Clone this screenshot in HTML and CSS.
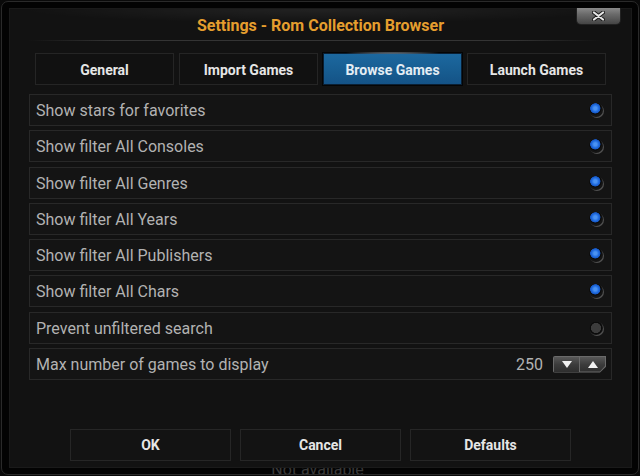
FILE: index.html
```html
<!DOCTYPE html>
<html>
<head>
<meta charset="utf-8">
<link rel="stylesheet" href="styles.css">
</head>
<body>
<div class="frame">
  <div class="panel">
    <div class="titlebar">
      <h1 class="title">Settings - Rom Collection Browser</h1>
      <button class="close" aria-label="Close">
        <svg width="13" height="10" viewBox="0 0 13 10"><path d="M2 1.5 L11 8.5 M11 1.5 L2 8.5" stroke="#1a1a1a" stroke-width="4" stroke-linecap="round"/><path d="M2 1.5 L11 8.5 M11 1.5 L2 8.5" stroke="#e6e6e6" stroke-width="2.2" stroke-linecap="round"/></svg>
      </button>
    </div>
    <div class="tabs">
      <div class="tab">General</div>
      <div class="tab">Import Games</div>
      <div class="tab active">Browse Games</div>
      <div class="tab">Launch Games</div>
    </div>
    <div class="rows">
      <div class="row"><span class="label">Show stars for favorites</span><span class="radio on"></span></div>
      <div class="row"><span class="label">Show filter All Consoles</span><span class="radio on"></span></div>
      <div class="row"><span class="label">Show filter All Genres</span><span class="radio on"></span></div>
      <div class="row"><span class="label">Show filter All Years</span><span class="radio on"></span></div>
      <div class="row"><span class="label">Show filter All Publishers</span><span class="radio on"></span></div>
      <div class="row"><span class="label">Show filter All Chars</span><span class="radio on"></span></div>
      <div class="row"><span class="label">Prevent unfiltered search</span><span class="radio"></span></div>
      <div class="row spin-row"><span class="label">Max number of games to display</span><span class="value">250</span>
        <span class="spinner"><span class="sbtn down"><i class="tri-down"></i></span><span class="sbtn up"><i class="tri-up"></i></span></span>
      </div>
    </div>
    <div class="buttons">
      <div class="btn">OK</div>
      <div class="btn">Cancel</div>
      <div class="btn">Defaults</div>
    </div>
  </div>
  <div class="under"><div class="under-text">Not available</div></div>
</div>
</body>
</html>
```

FILE: styles.css
```css
* { box-sizing: border-box; }
html, body { margin: 0; padding: 0; }
body {
  width: 640px;
  height: 476px;
  background: #0a0a0a;
  font-family: Roboto, "Noto Sans", sans-serif;
  overflow: hidden;
  padding: 1px 1px 1px 1px;
}
.frame {
  width: 638px;
  height: 474px;
  border: 1px solid #2a2a2a;
  border-radius: 7px;
  background: #030303;
  padding: 6px 6px 0 7px;
}
.panel {
  height: 460px;
  background: #121212;
  border: 1px solid #1a1a1a;
  display: flex;
  flex-direction: column;
}
.titlebar {
  position: relative;
  height: 31px;
  background: radial-gradient(ellipse 300px 14px at 50% 0, rgba(255,255,255,0.07), rgba(255,255,255,0));
  display: flex;
  align-items: center;
  justify-content: center;
}
.titlebar::after {
  content: "";
  position: absolute;
  left: 18px;
  right: 30px;
  bottom: -1px;
  height: 1px;
  background: linear-gradient(90deg, rgba(60,60,60,0), #343434 15%, #343434 85%, rgba(60,60,60,0));
}
.title {
  margin: 2px 0 0 0;
  font-size: 16px;
  font-weight: 700;
  color: #e59e2e;
  letter-spacing: 0;
}
.close {
  position: absolute;
  top: -1px;
  right: 10px;
  width: 45px;
  height: 17px;
  padding: 0;
  border: 1px solid #222;
  border-top: none;
  border-radius: 0 0 5px 5px;
  background: linear-gradient(#8a8a8a, #6a6a6a 40%, #454545);
  display: flex;
  align-items: center;
  justify-content: center;
}
.close svg { display: block; }
.tabs {
  margin: 13px 0 0 25px;
  width: 571px;
  display: grid;
  grid-template-columns: repeat(4, 1fr);
  gap: 0 5px;
}
.tab {
  height: 32px;
  border: 1px solid #252525;
  background: #111;
  color: #e6e6e6;
  font-size: 14px;
  font-weight: 700;
  display: flex;
  align-items: center;
  justify-content: center;
  padding-top: 1px;
}
.tab.active {
  position: relative;
  background: linear-gradient(#1c689f, #175c90 60%, #145286);
  border: 1px solid #0a1f33;
  color: #e4edf4;
  box-shadow: 0 0 0 1px #050505;
}
.tab.active::before {
  content: "";
  position: absolute;
  left: 10%;
  right: 10%;
  top: -2px;
  height: 2px;
  background: radial-gradient(ellipse at 50% 50%, rgba(200,220,235,0.7), rgba(200,220,235,0) 70%);
}
.rows {
  margin: 9px 0 0 19px;
  width: 583px;
  display: flex;
  flex-direction: column;
  gap: 4.3px;
}
.row {
  height: 32px;
  border: 1px solid #282828;
  background: #141414;
  display: flex;
  align-items: center;
  padding: 1px 8px 0 6px;
}
.label {
  flex: 1;
  font-size: 16px;
  color: #b2b2b2;
}
.radio {
  width: 14px;
  height: 14px;
  margin-top: -1px;
  border-radius: 50%;
  background: radial-gradient(circle at 50% 50%, #3c3c3c 0 4.8px, #0b0b0b 5.3px 6px, rgba(0,0,0,0) 6.6px);
  box-shadow: 1px 1px 0 0 #505050;
}
.radio.on {
  background: radial-gradient(circle at 45% 38%, #4a92f2 0 1.5px, #1f6be0 3.5px, #1757c2 4.9px, #0b0b0b 5.4px 6px, rgba(0,0,0,0) 6.6px);
}
.spin-row { padding-right: 5px; }
.value {
  font-size: 16px;
  color: #b2b2b2;
  margin-right: 10px;
}
.spinner {
  display: flex;
  width: 53px;
  height: 17px;
  margin-top: -1px;
  background: #6a6a6a;
  clip-path: polygon(0 0, 100% 0, 100% 65%, calc(100% - 6px) 100%, 0 100%);
  padding: 1px;
  gap: 1px;
  border-radius: 2px 0 0 2px;
}
.sbtn {
  flex: 1;
  background: linear-gradient(#585858, #3c3c3c 50%, #2e2e2e);
  display: flex;
  align-items: center;
  justify-content: center;
}
.sbtn.up { clip-path: polygon(0 0, 100% 0, 100% 62%, calc(100% - 5px) 100%, 0 100%); }
.tri-down, .tri-up {
  display: block;
  width: 0;
  height: 0;
  border-left: 5px solid transparent;
  border-right: 5px solid transparent;
}
.tri-down { border-top: 7px solid #f2f2f2; }
.tri-up { border-bottom: 7px solid #f2f2f2; }
.buttons {
  margin: 49px auto 0 auto;
  display: grid;
  grid-template-columns: repeat(3, 161px);
  gap: 9px;
}
.btn {
  height: 32px;
  border: 1px solid #262626;
  background: #131313;
  color: #e6e6e6;
  font-size: 14px;
  font-weight: 700;
  display: flex;
  align-items: center;
  justify-content: center;
  padding-top: 0;
}
.under {
  height: 6px;
  overflow: hidden;
}
.under-text {
  margin-top: -6px;
  text-align: center;
  font-size: 16px;
  line-height: 16px;
  color: #3a3a3a;
  padding-right: 6px;
}
```
